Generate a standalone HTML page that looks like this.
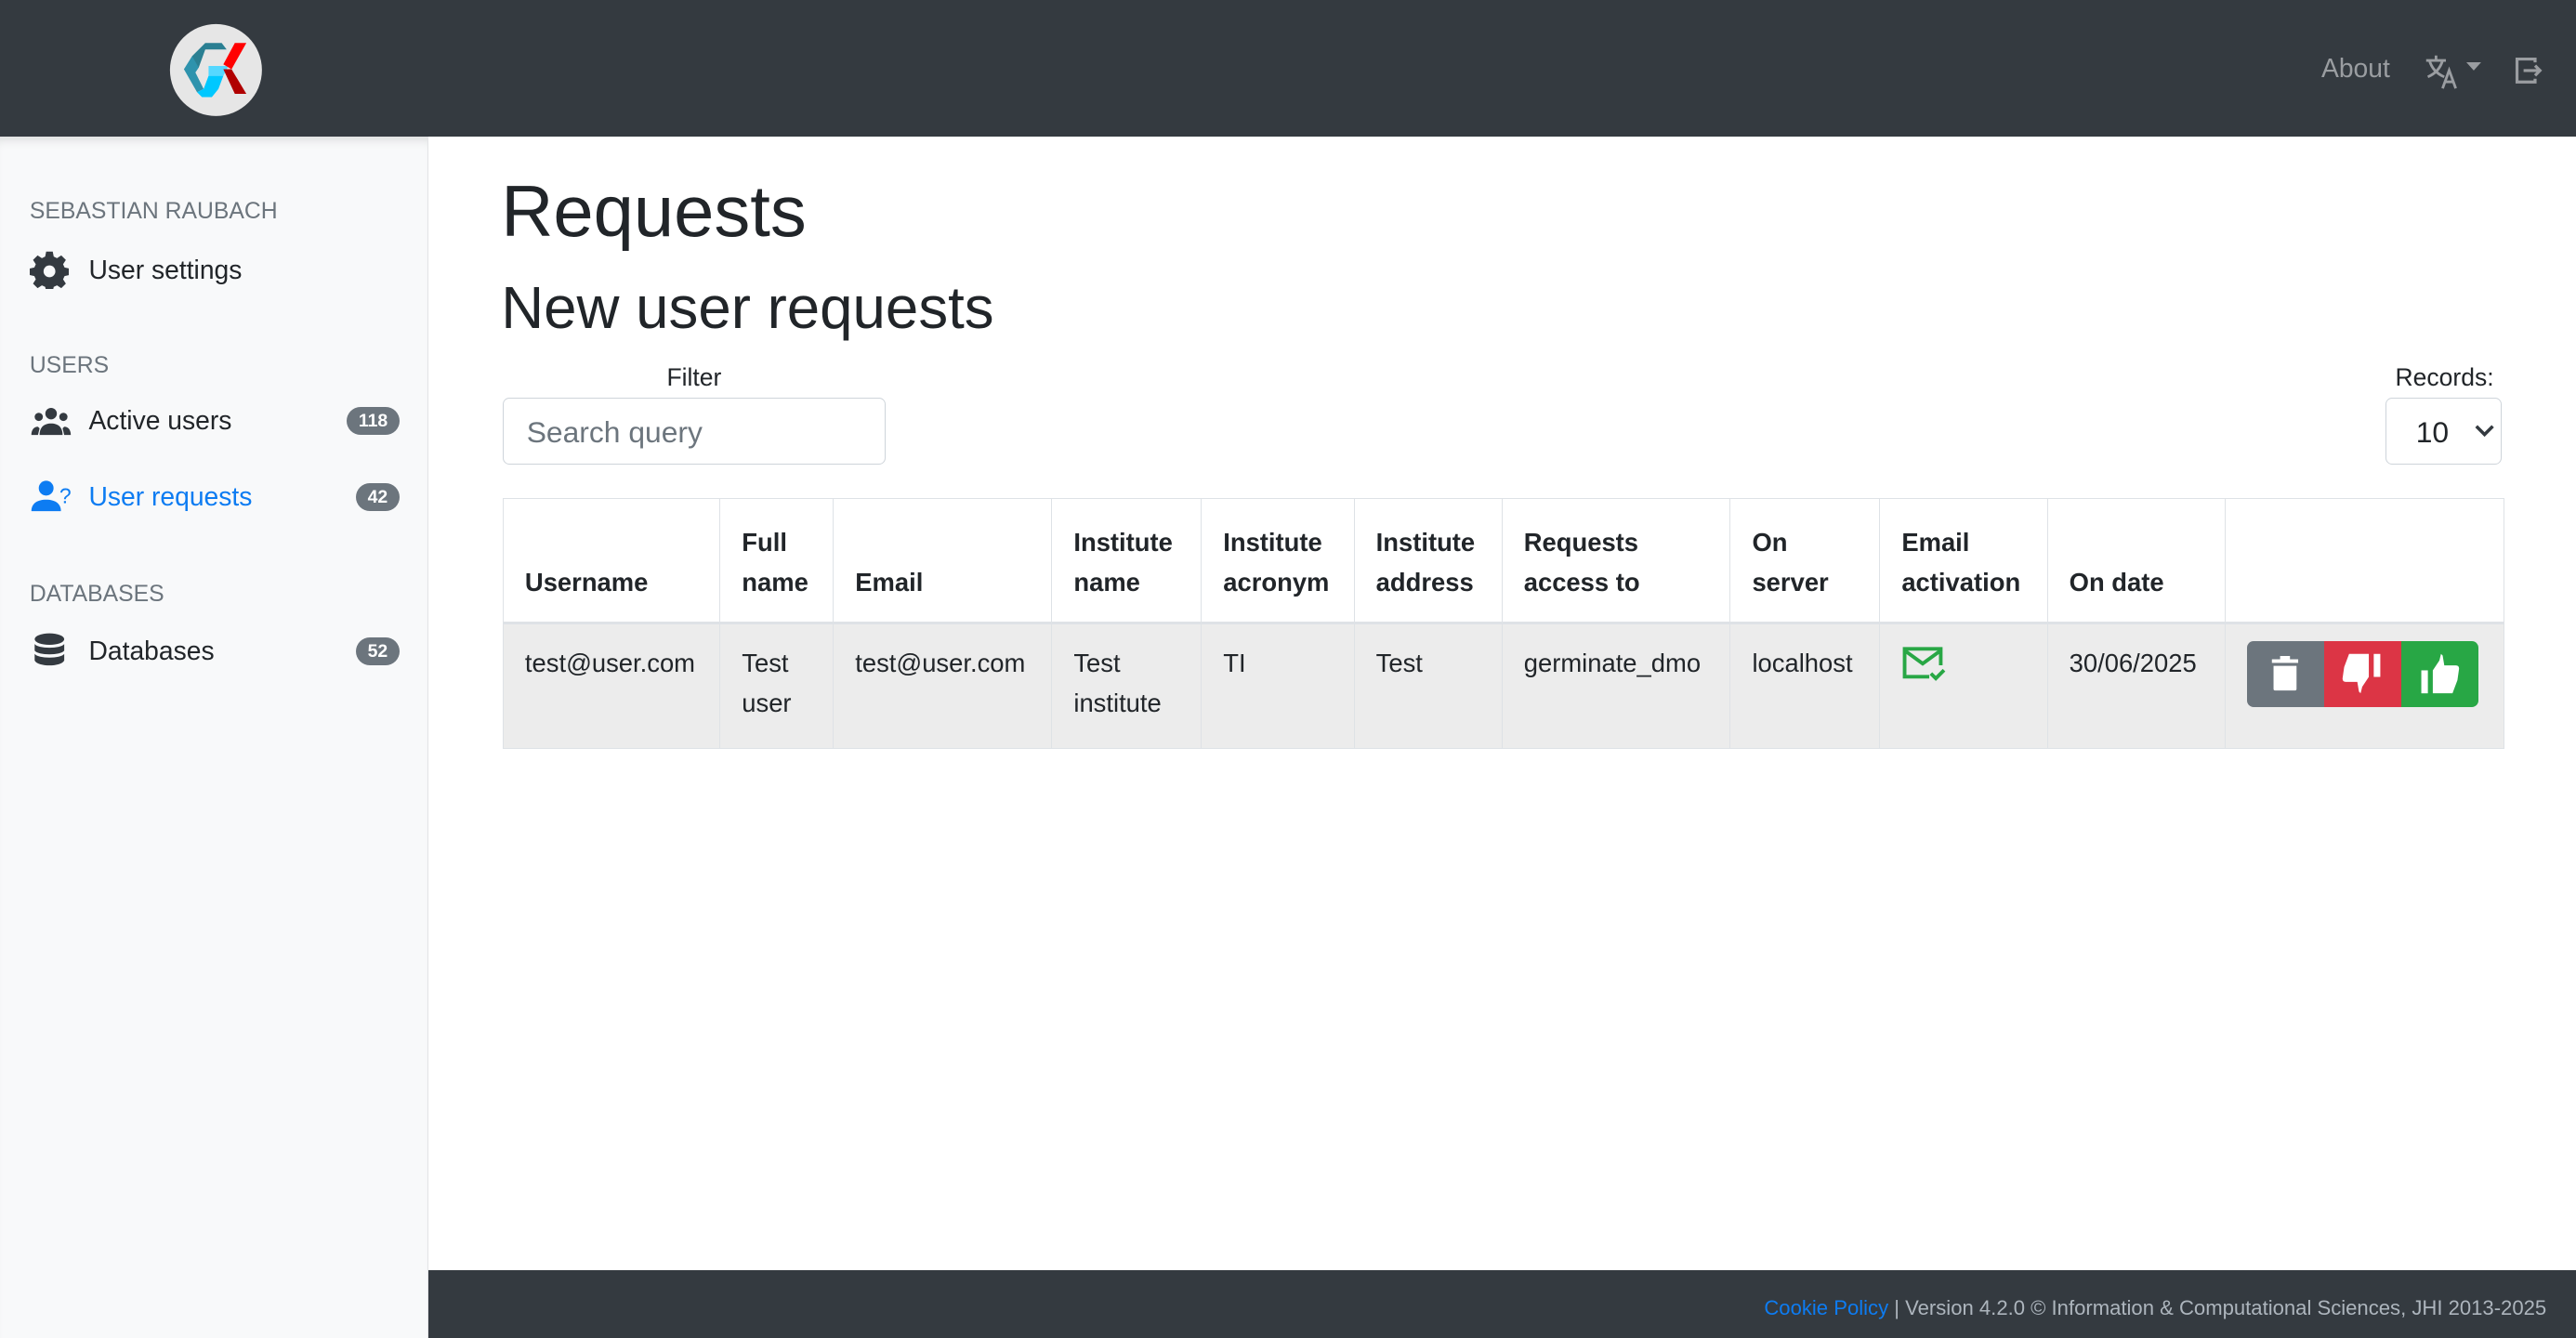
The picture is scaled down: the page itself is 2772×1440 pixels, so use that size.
<!DOCTYPE html>
<html><head><meta charset="utf-8"><style>
html,body{margin:0;padding:0;overflow:hidden;width:2772px;height:1440px;background:#fff}
#w{zoom:1.76786;width:1568px;height:815px;position:relative;font-family:"Liberation Sans",sans-serif;color:#212529;font-size:16px}
.nav{position:absolute;left:0;top:0;width:1568px;height:83px;background:#343a40}
.side{position:absolute;left:0;top:83px;width:260px;height:732px;background:#f8f9fa;border-right:1px solid #e3e4e6;box-shadow:inset 0 6px 6px -4px rgba(0,0,0,.12)}
.foot{position:absolute;left:261px;top:773px;width:1307px;height:42px;background:#343a40;color:#adb5bd;font-size:12.5px;text-align:right;line-height:46px}
.foot span{padding-right:18px}
.hd{position:absolute;left:18px;font-size:14px;color:#6c757d;text-transform:uppercase}
.it{position:absolute;left:18px;width:225px;height:24px;font-size:16px;line-height:24px}
.it svg{position:absolute;left:0;top:0}
.it .t{position:absolute;left:36px}
.badge{position:absolute;right:0;top:4px;background:#6c757d;color:#fff;font-size:11px;font-weight:bold;border-radius:9px;padding:0 7px;line-height:17px}
table{position:absolute;left:306px;top:303px;border-collapse:collapse;width:1218px;table-layout:fixed;font-size:15.5px}
th,td{border:1px solid #dee2e6;padding:12px 13px;text-align:left;vertical-align:bottom;line-height:24px;overflow:hidden}
th{height:51px;font-weight:bold;border-bottom:2px solid #dee2e6}
td{vertical-align:top;background:#ececec;height:51px}
</style></head><body><div id="w">
<div class="nav">
<svg style="position:absolute;left:103px;top:14px" width="57" height="57" viewBox="0 0 57 57">
<circle cx="28.5" cy="28.5" r="28" fill="#e6e6e6"/>
<polygon points="14,20 22,12 32,12 35,16 22,16 18,27 14,27" fill="#2a7f92"/>
<polygon points="9,28 14,20 18,27 16,30 21,40 17,42" fill="#2e93ad"/>
<polygon points="17,42 21,40 24,32 33,32 30,40 26,45 20,45" fill="#00c8ff"/>
<polygon points="24,26 36,26 33,32 24,32" fill="#55d8ff"/>
<polygon points="40,12 47,12 38,28 33,25" fill="#ff0000"/>
<polygon points="33,28 38,28 47,43 40,43" fill="#b00000"/>
</svg>
<span style="position:absolute;left:1413px;top:32px;color:#9a9da1;font-size:16px">About</span>
<svg style="position:absolute;left:1476px;top:33px" width="22" height="22" viewBox="0 0 22 22" fill="none" stroke="#9a9da1" stroke-width="1.6"><path d="M1 4H13M7 1V4M3 4Q5 11 12 14M11 4Q9 11 2 14"/><path d="M11 21L15 10L19 21M12.5 17H17.5"/></svg>
<svg style="position:absolute;left:1501px;top:38px" width="10" height="6"><path d="M0 0H9L4.5 5Z" fill="#9a9da1"/></svg>
<svg style="position:absolute;left:1530px;top:34px" width="19" height="18" viewBox="0 0 19 18" fill="none" stroke="#9a9da1" stroke-width="1.8"><path d="M13 4V2H2V16H13V14"/><path d="M6 9H16M13 6L16 9L13 12"/></svg>
</div>
<div class="side">
<div class="hd" style="top:38px">Sebastian Raubach</div>
<div class="it" style="top:69px"><svg width="24" height="24" viewBox="0 0 24 24"><path fill="#343a40" d="M10 1h4l.6 3 2 1 2.6-1.7 2.8 2.8L20.3 8.7l.9 2 2.8.6v4l-2.8.6-.9 2 1.7 2.6-2.8 2.8-2.6-1.7-2 .9-.6 2.8h-4l-.6-2.8-2-.9-2.6 1.7-2.8-2.8 1.7-2.6-.9-2L0 15.3v-4l2.8-.6.9-2L2 6.1 4.8 3.3 7.4 5l2-1z"/><circle cx="12" cy="13" r="3.6" fill="#f8f9fa"/></svg><span class="t">User settings</span></div>
<div class="hd" style="top:132px">Users</div>
<div class="it" style="top:161px"><svg width="26" height="24" viewBox="0 0 26 24" fill="#343a40"><circle cx="13" cy="8" r="3.5"/><circle cx="5.5" cy="10" r="2.5"/><circle cx="20.5" cy="10" r="2.5"/><path d="M6 21c0-5 3-7 7-7s7 2 7 7z"/><path d="M1 21c0-3 1.5-5 4-5l1 1-1 4zM25 21c0-3-1.5-5-4-5l-1 1 1 4z"/></svg><span class="t">Active users</span><span class="badge">118</span></div>
<div class="it" style="top:207px;color:#0d7cf2"><svg width="26" height="24" viewBox="0 0 26 24" fill="#0d7cf2"><circle cx="10" cy="7" r="4.5"/><path d="M1 21c0-5 4-7 9-7s9 2 9 7z"/><text x="18" y="16" font-size="13" font-family="Liberation Sans">?</text></svg><span class="t">User requests</span><span class="badge">42</span></div>
<div class="hd" style="top:271px">Databases</div>
<div class="it" style="top:301px"><svg width="24" height="24" viewBox="0 0 24 24" fill="#343a40"><ellipse cx="12" cy="5" rx="9" ry="3.5"/><path d="M3 8c2 3 16 3 18 0v4c-2 3-16 3-18 0z"/><path d="M3 14c2 3 16 3 18 0v4c-2 4-16 4-18 0z"/></svg><span class="t">Databases</span><span class="badge">52</span></div>
</div>
<div style="position:absolute;left:305px;top:104px;font-size:44px;font-weight:500">Requests</div>
<div style="position:absolute;left:305px;top:167px;font-size:36px;font-weight:500">New user requests</div>
<div style="position:absolute;left:306px;top:221px;width:233px;text-align:center;font-size:15px">Filter</div>
<div style="position:absolute;left:306px;top:242px;width:233px;height:41px;border:1px solid #ced4da;border-radius:4px;box-sizing:border-box;font-size:18px;color:#6c757d;line-height:41px;padding-left:14px">Search query</div>
<div style="position:absolute;left:1440px;top:221px;width:78px;text-align:right;font-size:15px">Records:</div>
<div style="position:absolute;left:1452px;top:242px;width:71px;height:41px;border:1px solid #ced4da;border-radius:4px;box-sizing:border-box;font-size:18px;line-height:41px;padding-left:18px">10<svg style="position:absolute;right:4px;top:16px" width="12" height="8"><path d="M1 1L6 6L11 1" fill="none" stroke="#343a40" stroke-width="2"/></svg></div>
<table>
<colgroup><col style="width:132px"><col style="width:69px"><col style="width:133px"><col style="width:91px"><col style="width:93px"><col style="width:90px"><col style="width:139px"><col style="width:91px"><col style="width:102px"><col style="width:108px"><col style="width:170px"></colgroup>
<tr><th>Username</th><th>Full name</th><th>Email</th><th>Institute name</th><th>Institute acronym</th><th>Institute address</th><th>Requests access to</th><th>On server</th><th>Email activation</th><th>On date</th><th></th></tr>
<tr><td>test@user.com</td><td>Test user</td><td>test@user.com</td><td>Test institute</td><td>TI</td><td>Test</td><td>germinate_dmo</td><td>localhost</td><td><svg width="28" height="24" viewBox="0 0 28 24" fill="none" stroke="#28a745" stroke-width="2.2"><path d="M17 20H2V3H24V13"/><path d="M2 4L13 12L24 4"/><path d="M18 18L21 21L26 16"/></svg></td><td>30/06/2025</td><td><div style="display:flex;width:141px;height:40px;border-radius:4px;overflow:hidden;margin-top:-2px">
<div style="flex:1;background:#6c757d;display:flex;align-items:center;justify-content:center"><svg width="18" height="22" viewBox="0 0 18 22" fill="#fff"><rect x="1" y="2" width="16" height="2.2"/><rect x="6" y="0" width="6" height="3"/><path d="M2 6H16V20Q16 21 15 21H3Q2 21 2 20Z"/></svg></div>
<div style="flex:1;background:#dc3545;display:flex;align-items:center;justify-content:center"><svg width="26" height="26" viewBox="0 0 26 26" fill="#fff"><rect x="20" y="1" width="4" height="14"/><path d="M5 1H17V15L13 21L12 25L11 24L10 18H3Q1 18 1 16L2 9Z"/></svg></div>
<div style="flex:1;background:#28a745;display:flex;align-items:center;justify-content:center"><svg width="26" height="26" viewBox="0 0 26 26" fill="#fff" transform="scale(1,-1)"><rect x="2" y="1" width="4" height="14"/><path d="M21 1H9V15L13 21L14 25L15 24L16 18H23Q25 18 25 16L24 9Z"/></svg></div>
</div></td></tr>
</table>
<div class="foot"><span><span style="color:#0d7cf2;padding:0">Cookie Policy</span> | Version 4.2.0 © Information &amp; Computational Sciences, JHI 2013-2025</span></div>
</div></body></html>
